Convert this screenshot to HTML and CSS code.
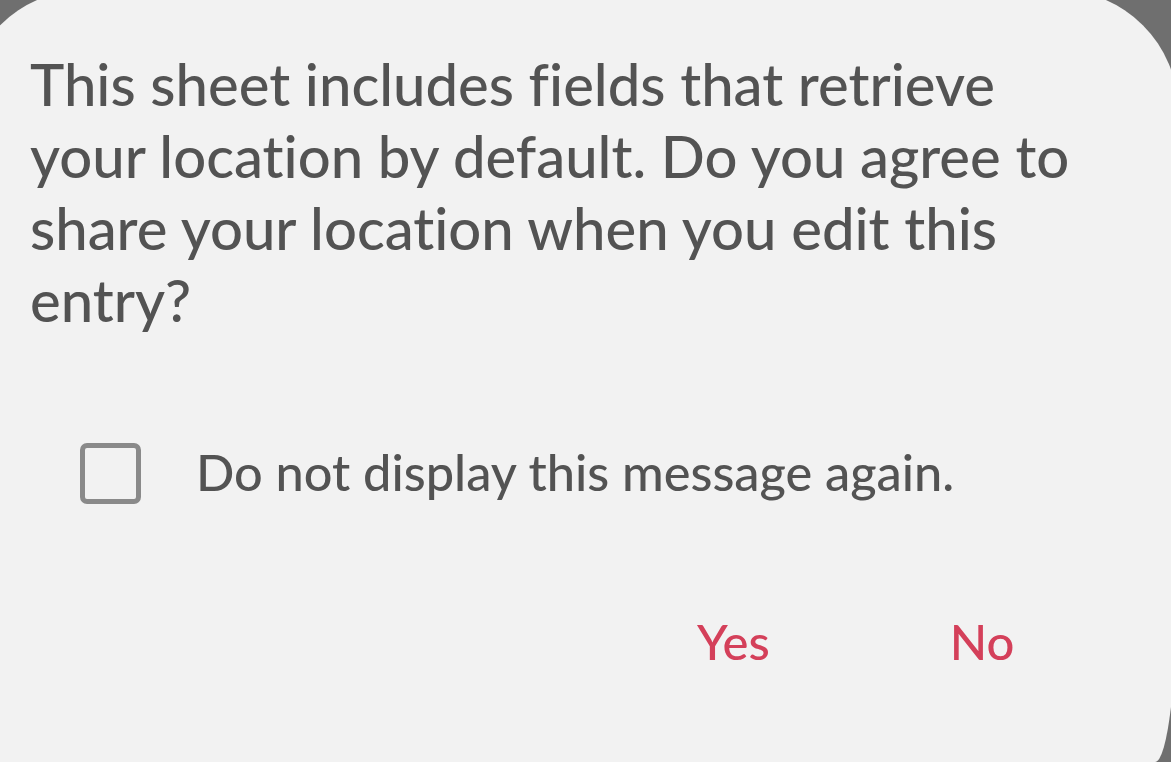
FILE: index.html
```html
<!DOCTYPE html>
<html lang="en">
<head>
<meta charset="utf-8">
<title>Location permission</title>
<link rel="stylesheet" href="styles.css">
</head>
<body>
<div class="dialog">
  <p class="message">This sheet includes fields that retrieve your location by default. Do you agree to share your location when you edit this entry?</p>
  <label class="option">
    <span class="checkbox"></span>
    <span class="option-text">Do not display this message again.</span>
  </label>
  <div class="actions">
    <span class="btn">Yes</span>
    <span class="btn">No</span>
  </div>
</div>
</body>
</html>
```

FILE: styles.css
```css
html, body {
  margin: 0;
  padding: 0;
  width: 1171px;
  height: 762px;
  overflow: hidden;
  background: #6f6f6f;
}

.dialog {
  box-sizing: border-box;
  margin-left: -35px;
  margin-top: -10px;
  width: 1213px;
  height: 772px;
  background: #f2f2f2;
  border-radius: 120px 120px 23px 0 / 120px 120px 195px 0;
  padding: 0 0 0 65px;
  display: flex;
  flex-direction: column;
  font-family: Lato, "Noto Sans", sans-serif;
  font-weight: 500;
  font-variant-ligatures: none;
  color: #535353;
}

.message {
  margin: 0;
  padding-top: 58px;
  width: 1075px;
  font-size: 58px;
  line-height: 72px;
}

.option {
  display: flex;
  align-items: center;
  gap: 55px;
  margin-top: 107px;
  margin-left: 50px;
}

.checkbox {
  box-sizing: border-box;
  width: 61px;
  height: 61px;
  border: 5px solid #8a8a8a;
  border-radius: 7px;
  flex: none;
}

.option-text {
  font-size: 50.5px;
  line-height: 60px;
  position: relative;
  top: -2px;
}

.actions {
  display: flex;
  gap: 180px;
  margin-top: 107px;
  margin-left: 667px;
}

.btn {
  color: #d4405a;
  font-size: 49px;
  line-height: 60px;
}
```
